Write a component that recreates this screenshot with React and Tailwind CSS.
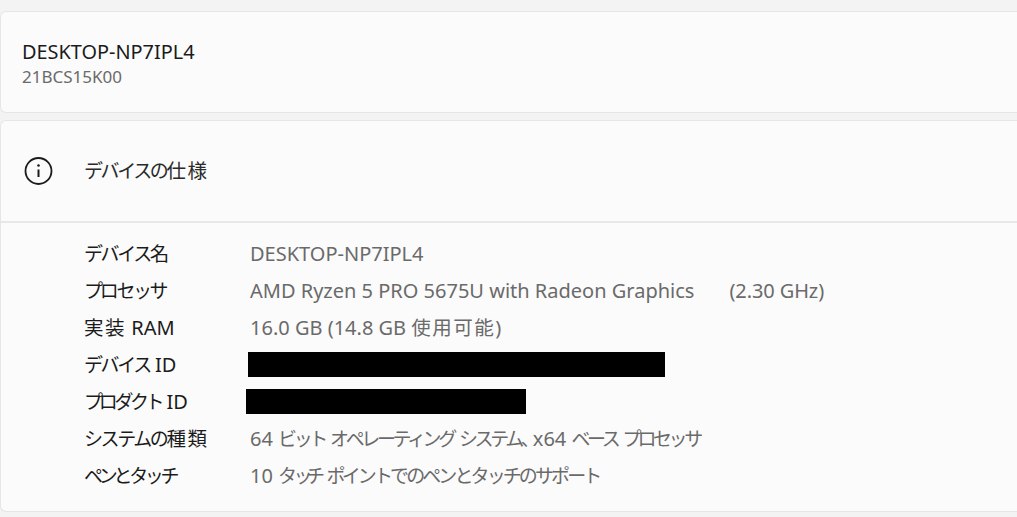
const rows = [
  { k: "デバイス名", v: "DESKTOP-NP7IPL4" },
  { k: "プロセッサ", v: "AMD Ryzen 5 PRO 5675U with Radeon Graphics", extra: "(2.30 GHz)" },
  { k: "実装 RAM", v: "16.0 GB (14.8 GB 使用可能)" },
  { k: "デバイス ID", bar: "w-[417px] ml-[-2px]" },
  { k: "プロダクト ID", bar: "w-[280px] ml-[-4px]", kt: 2 },
  { k: "システムの種類", v: "64 ビット オペレーティング システム、x64 ベース プロセッサ", vt: 2 },
  { k: "ペンとタッチ", v: "10 タッチ ポイントでのペンとタッチのサポート", kt: 2, vt: 1 },
];

const pattern = /[ッィャュョー、]+|[ペンタチトセサプポ]+|[\u3040-\u30FF]+|[\u4E00-\u9FFF]+|[^\u3040-\u30FF、\u4E00-\u9FFF]+/g;

const kanaStyles = [
  ["tracking-[-6px]", "tracking-[-3.2px]", "tracking-[-2.4px]"],
  ["tracking-[-6.5px]", "tracking-[-3.7px]", "tracking-[-2.9px]"],
  ["tracking-[-7px]", "tracking-[-4.2px]", "tracking-[-3.4px]"],
];

function Jp({ children, t = 0 }) {
  const [small, narrow, normal] = kanaStyles[t];
  return children.match(pattern).map((p, i) => {
    if (/^[ッィャュョー、]/.test(p)) return <span key={i} className={`text-[19px] ${small}`}>{p}</span>;
    if (/^[ペンタチトセサプポ]/.test(p)) return <span key={i} className={`text-[19px] ${narrow}`}>{p}</span>;
    if (/^[\u3040-\u30FF]/.test(p)) return <span key={i} className={`text-[19px] ${normal}`}>{p}</span>;
    if (/^[\u4E00-\u9FFF]/.test(p)) return <span key={i} className="text-[19.5px] tracking-[1.5px]">{p}</span>;
    return <span key={i}>{p}</span>;
  });
}

export default function App() {
  return (
    <div className="w-[1017px] h-[517px] overflow-hidden bg-[#f3f3f3] pt-[11px] font-['Noto_Sans','Noto_Sans_CJK_JP',sans-serif]">
      <div className="h-[102px] rounded-l-md border-y border-l border-[#e6e6e6] bg-[#fbfbfb] pl-[21px] pt-[27px]">
        <div className="text-[19.9px] leading-[26px] text-[#1b1b1b]">DESKTOP-NP7IPL4</div>
        <div className="text-[17px] leading-[24px] text-[#6a6a6a]">21BCS15K00</div>
      </div>
      <div className="mt-[7px] h-[392px] rounded-l-md border-y border-l border-[#e6e6e6] bg-[#fbfbfb]">
        <div className="flex h-[102px] items-center border-b-2 border-[#e8e8e8] pl-[23px]">
          <svg width="30" height="30" viewBox="0 0 30 30" fill="none" className="text-[#1b1b1b]">
            <circle cx="14.5" cy="15" r="13" stroke="currentColor" strokeWidth="1.8" />
            <circle cx="14.5" cy="9.5" r="1.3" fill="currentColor" />
            <path d="M14.5 13.5V21" stroke="currentColor" strokeWidth="2" />
          </svg>
          <div className="ml-[30px] text-[20px] leading-[26px] text-[#2a2a2a]"><Jp>デバイスの仕様</Jp></div>
        </div>
        <div className="flex flex-col pl-[83px] pt-[12px]">
          {rows.map(({ k, v, extra, bar, kt, vt }) => (
            <div key={k} className="flex h-[37px] items-center text-[20px] leading-[26px]">
              <div className="w-[166px] whitespace-nowrap text-[#1b1b1b]"><Jp t={kt}>{k}</Jp></div>
              {v ? (
                <div className="flex gap-[35px] whitespace-nowrap text-[#6a6a6a]">
                  <span><Jp t={vt}>{v}</Jp></span>
                  {extra && <span className="tracking-[-0.1px]">{extra}</span>}
                </div>
              ) : (
                <div className={`h-[25px] bg-black ${bar}`} />
              )}
            </div>
          ))}
        </div>
      </div>
    </div>
  );
}
